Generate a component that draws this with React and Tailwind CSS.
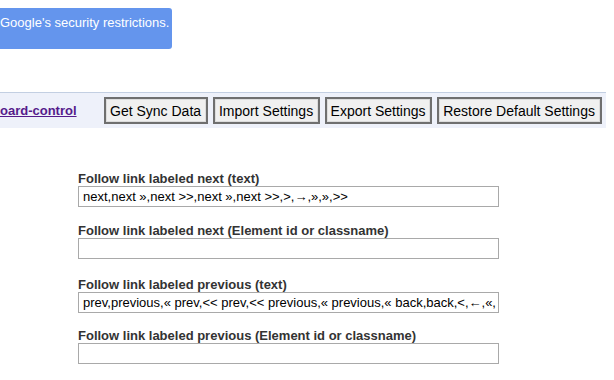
import React from "react";

const fieldLabel = "text-[13px] font-bold text-[#333] leading-[15px]";
const inputCls =
  "block w-[421px] h-[21px] border border-[#a9a9a9] bg-white px-[4px] text-[13px] text-black leading-[19px] whitespace-nowrap overflow-hidden";

function Field({ label, value, mt }) {
  return (
    <div className={mt}>
      <div className={fieldLabel}>{label}</div>
      <div className={inputCls}>{value}</div>
    </div>
  );
}

function Btn({ children, w }) {
  return (
    <button
      className={`${w} h-[27px] border-2 border-[#6f6f6f] bg-[#f0f0f0] text-[14px] text-black leading-[20px] whitespace-nowrap text-center shadow-[inset_0_0_0_1px_#dcdcdc]`}
    >
      {children}
    </button>
  );
}

export default function App() {
  return (
    <div
      className="w-[614px] h-[380px] bg-white overflow-hidden"
      style={{ fontFamily: '"Liberation Sans", Arial, sans-serif' }}
    >
      <div className="pt-[8px]">
        <div className="w-[172px] h-[41px] bg-[#6495ed] rounded-r-[3px] text-white text-[13px] leading-[15px] pt-[7px] whitespace-nowrap overflow-hidden">
          Google's security restrictions.
        </div>
      </div>
      <div className="mt-[43px] w-[606px] h-[36px] border-t border-[#c3cfe2] bg-[#eef1fa] flex items-center">
        <a className="text-[13px] font-bold text-[#551a8b] underline whitespace-nowrap">
          oard-control
        </a>
        <div className="flex gap-[5px] ml-[27px]">
          <Btn w="w-[104px]">Get Sync Data</Btn>
          <Btn w="w-[107px]">Import Settings</Btn>
          <Btn w="w-[107px]">Export Settings</Btn>
          <Btn w="w-[165px]">Restore Default Settings</Btn>
        </div>
      </div>
      <div className="pl-[78px] pt-[43px]">
        <Field
          label="Follow link labeled next (text)"
          value="next,next »,next >>,next »,next >>,>,→,»,»,>>"
        />
        <Field
          mt="mt-[16px]"
          label="Follow link labeled next (Element id or classname)"
          value=""
        />
        <Field
          mt="mt-[18px]"
          label="Follow link labeled previous (text)"
          value="prev,previous,« prev,<< prev,<< previous,« previous,« back,back,<,←,«,"
        />
        <Field
          mt="mt-[15px]"
          label="Follow link labeled previous (Element id or classname)"
          value=""
        />
      </div>
    </div>
  );
}
